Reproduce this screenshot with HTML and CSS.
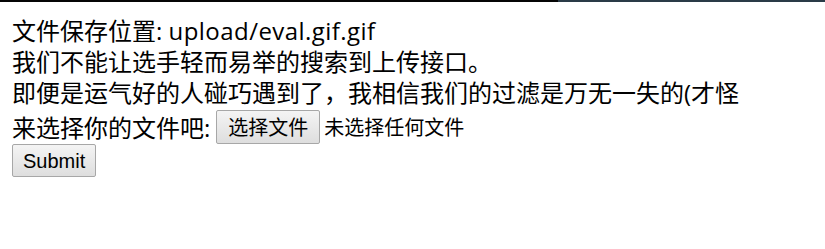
FILE: index.html
```html
<!DOCTYPE html>
<html lang="zh-CN">
<head>
<meta charset="utf-8">
<title>upload</title>
<link rel="stylesheet" href="styles.css">
</head>
<body>
<div class="topbar"><div class="tb-dark"></div><div class="tb-slate"></div></div>
<div class="page">
  <div class="line">文件保存位置: <span class="path">upload/eval.gif.gif</span></div>
  <div class="line">我们不能让选手轻而易举的搜索到上传接口。</div>
  <div class="line">即便是运气好的人碰巧遇到了，我相信我们的过滤是万无一失的(才怪</div>
  <form class="upload">
    <div class="file-row">
      <span class="label">来选择你的文件吧:</span>
      <button type="button" class="btn file-btn">选择文件</button>
      <span class="file-status">未选择任何文件</span>
    </div>
    <button type="button" class="btn submit">Submit</button>
  </form>
</div>
</body>
</html>
```

FILE: styles.css
```css
html, body {
  margin: 0;
  padding: 0;
  background: #ffffff;
}
body {
  font-family: "Open Sans", "Noto Sans CJK SC", sans-serif;
  color: #000;
}
.topbar {
  display: flex;
  height: 2px;
}
.tb-dark {
  width: 558px;
  background: #050505;
}
.tb-slate {
  flex: 1;
  background: #2a3b47;
}
.page {
  padding: 13px 12px 0 12px;
}
.line {
  font-size: 24px;
  line-height: 31px;
  white-space: nowrap;
}
.path {
  letter-spacing: 0.45px;
}
.upload {
  display: flex;
  flex-direction: column;
  align-items: flex-start;
}
.file-row {
  display: flex;
  align-items: center;
  height: 35px;
  margin-top: 1px;
  font-size: 24px;
}
.label {
  margin-right: 6px;
}
.btn {
  font-family: "Noto Sans CJK SC", sans-serif;
  font-size: 20px;
  color: #000;
  background: linear-gradient(#f4f4f4, #dedede);
  border: 1px solid #a7a7a7;
  border-radius: 2px;
  padding: 0 11px;
  height: 34px;
  margin: 0;
  line-height: 30px;
}
.file-status {
  font-family: "Noto Sans CJK SC", sans-serif;
  font-size: 20px;
  margin-left: 4px;
}
.submit {
  font-family: "Liberation Sans", Arial, sans-serif;
  height: 33px;
  padding: 0 10px;
}
```
